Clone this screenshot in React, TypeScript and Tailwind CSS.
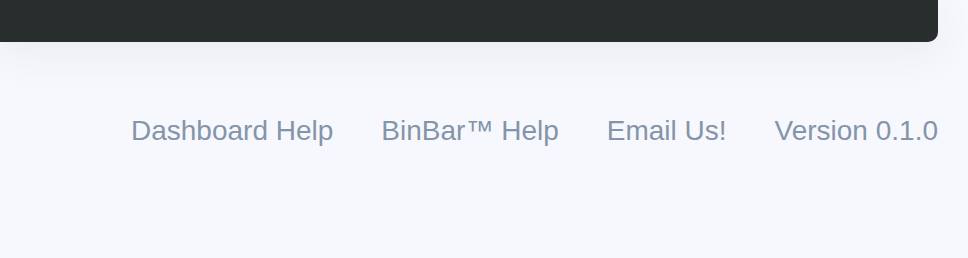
export default function App() {
  const links = ["Dashboard Help", "BinBar™ Help", "Email Us!", "Version 0.1.0"];
  return (
    <div className="min-h-[258px] w-full bg-[#f7f8fd] pr-[30px] font-['Liberation_Sans',Arial,sans-serif]">
      <div className="h-[42px] rounded-br-[10px] bg-[#282d2e] shadow-[0_10px_40px_rgba(40,50,90,0.07)]" />
      <footer className="mt-[73px] flex justify-end gap-[48px] text-[28px] leading-[32px] text-[#8595a9]">
        {links.map((l) => (
          <a key={l} href="#" className="whitespace-nowrap">
            {l}
          </a>
        ))}
      </footer>
    </div>
  );
}
